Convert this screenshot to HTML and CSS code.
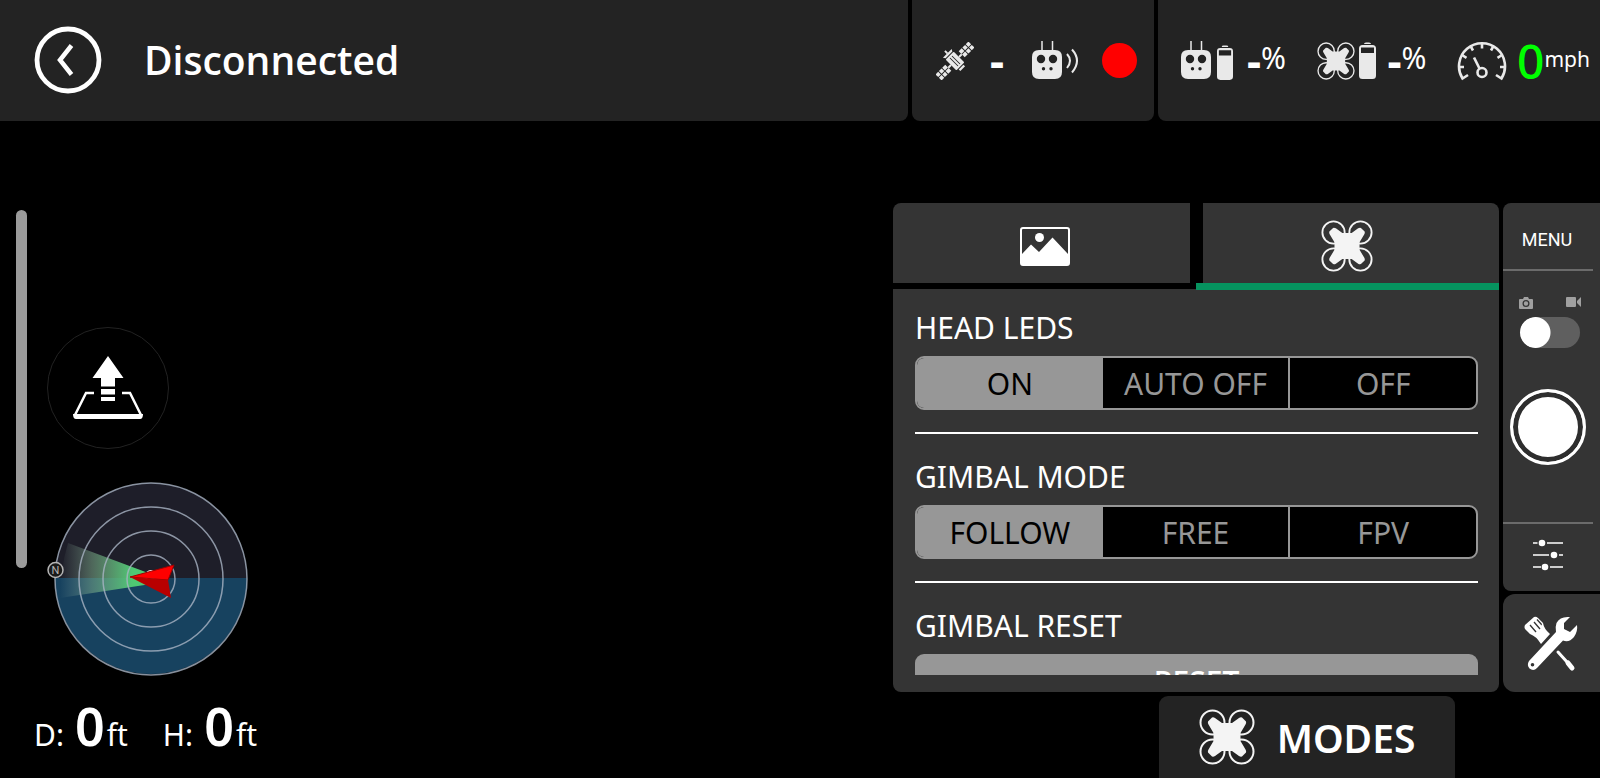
FILE: index.html
```html
<!DOCTYPE html>
<html lang="en">
<head>
<meta charset="utf-8">
<meta name="viewport" content="width=device-width, initial-scale=1">
<title>Flight Controller</title>
<link rel="stylesheet" href="styles.css">
</head>

<body>
<svg class="defs" aria-hidden="true">
  <symbol id="drone" viewBox="0 0 56 56">
    <g fill="none" stroke="currentColor" stroke-width="2">
      <circle cx="13.5" cy="13.5" r="12"/>
      <circle cx="42.5" cy="13.5" r="12"/>
      <circle cx="13.5" cy="42.5" r="12"/>
      <circle cx="42.5" cy="42.5" r="12"/>
    </g>
    <path fill="currentColor" d="M13 8.500L9 12.500Q8.500 14 9.500 15.500L14.500 24V32L9.500 40.500Q8.500 42 9 43.500L13 47.500Q14.500 48 16 47L23 42H33L40 47Q41.500 48 43 47.500L47 43.500Q47.500 42 46.500 40.500L41.500 32V24L46.500 15.500Q47.500 14 47 12.500L43 8.500Q41.500 8 40 9L33 14H23L16 9Q14.500 8 13 8.500Z"/>
  </symbol>
  <symbol id="remote" viewBox="0 0 30 39">
    <path stroke="currentColor" stroke-width="1.500" d="M10 0V10M20.500 0V10"/>
    <path fill="currentColor" fill-rule="evenodd" d="M7 9H23Q30 9 30 16V31Q30 38 23 38H7Q0 38 0 31V16Q0 9 7 9ZM9 13.800A4.200 4.200 0 1 0 9 22.200A4.200 4.200 0 1 0 9 13.800ZM21 13.800A4.200 4.200 0 1 0 21 22.200A4.200 4.200 0 1 0 21 13.800ZM11.500 26A1.700 1.700 0 1 0 11.500 29.400A1.700 1.700 0 1 0 11.500 26ZM19 26A1.700 1.700 0 1 0 19 29.400A1.700 1.700 0 1 0 19 26Z"/>
  </symbol>
  <symbol id="battery" viewBox="0 0 17 37">
    <path fill="currentColor" fill-rule="evenodd" d="M5 2Q5 .5 7 .5H10Q12 .5 12 2ZM3.500 3H13.500Q17 3 17 6.500V33.500Q17 37 13.500 37H3.500Q0 37 0 33.500V6.500Q0 3 3.500 3ZM2 5.500V11H15V5.500Z"/>
  </symbol>
</svg>

<header class="topbar">
  <div class="bar-cell title-cell">
    <button class="back" aria-label="Back">
      <svg width="68" height="68" viewBox="0 0 68 68">
        <circle cx="34" cy="34" r="31" fill="none" stroke="#fff" stroke-width="4.800"/>
        <path d="M37.500 19.500L26 34L37.500 48.500" fill="none" stroke="#fff" stroke-width="4.500"/>
      </svg>
    </button>
    <h1 class="title">Disconnected</h1>
  </div>
  <div class="bar-cell signal-cell">
    <svg class="icon" width="38" height="38" viewBox="-1 -1 40 40">
      <g transform="rotate(45 19 19)" fill="currentColor">
        <path fill-rule="evenodd" d="M12 13H26Q27 13 27 14V24Q27 25 26 25H12Q11 25 11 24V14Q11 13 12 13ZM13 17V18H25V17ZM13 20V21H25V20Z"/>
        <path d="M7.500 12.500L10 14V24L7.500 25.500ZM4 18H7.500V20H4ZM28 15.500H30.500V22.500H28ZM18 9H20V13H18ZM18 25H20V29H18Z"/>
        <path d="M14.500 4.500H18.500V9H14.500ZM19.500 4.500H23.500V9H19.500ZM14.500 -.5H18.500V3.500H14.500ZM19.500 -.5H23.500V3.500H19.500ZM14.500 -5.500H18.500V-1.500H14.500ZM19.500 -5.500H23.500V-1.500H19.500Z"/>
        <path d="M14.500 29H18.500V33.500H14.500ZM19.500 29H23.500V33.500H19.500ZM14.500 34.500H18.500V38.500H14.500ZM19.500 34.500H23.500V38.500H19.500ZM14.500 39.500H18.500V43.500H14.500ZM19.500 39.500H23.500V43.500H19.500Z"/>
      </g>
    </svg>
    <span class="dash">-</span>
    <span class="remote-signal">
      <svg class="icon" width="30" height="39"><use href="#remote"/></svg>
      <svg class="icon" width="13" height="26" viewBox="0 0 13 26" fill="none" stroke="currentColor" stroke-width="2">
        <path d="M1 6Q7 12.500 1 20M6 1.500Q16 12.500 6 24.500"/>
      </svg>
    </span>
    <span class="status-dot"></span>
  </div>
  <div class="bar-cell power-cell">
    <div class="power">
      <svg class="icon" width="30" height="39"><use href="#remote"/></svg>
      <svg class="icon battery" width="16" height="35"><use href="#battery"/></svg>
      <span class="dash">-</span><span class="percent">%</span>
    </div>
    <div class="power">
      <svg class="icon" width="38" height="38"><use href="#drone"/></svg>
      <svg class="icon battery-near" width="17" height="37"><use href="#battery"/></svg>
      <span class="dash">-</span><span class="percent">%</span>
    </div>
    <div class="speed">
      <svg class="icon" width="50" height="40" viewBox="0 0 50 40" fill="none" stroke="currentColor" stroke-width="2.600">
        <path d="M11 34L5.500 37.500A23 23 0 1 1 44.500 37.500L39 34"/>
        <path d="M2 26H7M48 26H43M5 14L9.500 16.800M45 14L40.500 16.800M13.500 5L16 9.500M36.500 5L34 9.500M25 2V7.500"/>
        <circle cx="25" cy="31.500" r="4.500"/>
        <path d="M22.500 27.500L17 16.500"/>
      </svg>
      <span class="speed-value">0</span><span class="speed-unit">mph</span>
    </div>
  </div>
</header>

<main class="flight">
  <section class="hud">
    <div class="hud-top">
      <div class="altitude-bar"></div>
      <div class="hud-column">
        <button class="launch" aria-label="Take off">
          <svg width="70" height="64" viewBox="0 0 70 64">
            <path fill="#fff" d="M35 0L50.500 22H42V30.500H28V22H19.500ZM28 33H42V38.500H28ZM28 41H42V45H28Z"/>
            <path fill="none" stroke="#fff" stroke-width="2.500" d="M21 37H13L2 59M49 37H57L68 59"/>
            <path fill="#fff" d="M0 58H70Q70 63 67 63H3Q0 63 0 58Z"/>
          </svg>
        </button>
        <svg class="radar" width="202" height="194" viewBox="0 0 202 194">
          <defs>
            <linearGradient id="beam" x1="0" x2="1">
              <stop offset="0" stop-color="#8fa79f" stop-opacity="0"/>
              <stop offset=".35" stop-color="#7fb08c" stop-opacity=".5"/>
              <stop offset=".8" stop-color="#4fc873"/>
            </linearGradient>
          </defs>
          <path fill="#1e1e29" d="M8 97A96 96 0 0 1 200 97Z"/>
          <path fill="#17425f" d="M8 96A96 96 0 0 0 200 96Z"/>
          <path fill="url(#beam)" d="M104 92L21 61Q13 88 13 116L104 102Z"/>
          <g fill="none" stroke="#a9b4c4" stroke-opacity=".8" stroke-width="1.500">
            <circle cx="104" cy="97" r="24"/>
            <circle cx="104" cy="97" r="48"/>
            <circle cx="104" cy="97" r="72"/>
            <circle cx="104" cy="97" r="96"/>
          </g>
          <circle cx="104" cy="94" r="6" fill="#fff"/>
          <path fill="#f00" stroke="#a00000" d="M83 95L127 83L121 98Z"/>
          <path fill="#b80000" d="M83 95L121 98L124 116Z"/>
          <circle cx="8.500" cy="88" r="7.500" fill="#1a1a1a" stroke="#b5b5b5" stroke-width="1.500"/>
          <text class="north" x="8.500" y="92" text-anchor="middle">N</text>
        </svg>
      </div>
    </div>
    <div class="readouts">
      <div class="readout"><span>D:</span><span class="readout-value">0</span><span>ft</span></div>
      <div class="readout"><span>H:</span><span class="readout-value">0</span><span>ft</span></div>
    </div>
  </section>

  <section class="controls">
    <div class="controls-row">
      <div class="panel">
        <div class="tabs">
          <button class="tab" aria-label="Camera settings">
            <svg width="50" height="39" viewBox="0 0 50 39">
              <rect x="1" y="1" width="48" height="37" rx="2" fill="none" stroke="#fff" stroke-width="2"/>
              <circle cx="19.500" cy="10.500" r="4.500" fill="#fff"/>
              <path fill="#fff" d="M2 27L11 17.500L19 25L32.500 10.500L48 27V38H2Z"/>
            </svg>
          </button>
          <button class="tab tab-active" aria-label="Aircraft settings">
            <svg class="icon-light" width="52" height="52"><use href="#drone"/></svg>
          </button>
        </div>
        <div class="panel-body">
          <div class="settings">
            <fieldset class="setting">
              <legend class="setting-name">HEAD LEDS</legend>
              <div class="segments">
                <label class="segment"><input type="radio" name="leds" checked><span>ON</span></label>
                <label class="segment"><input type="radio" name="leds"><span>AUTO OFF</span></label>
                <label class="segment"><input type="radio" name="leds"><span>OFF</span></label>
              </div>
            </fieldset>
            <fieldset class="setting">
              <legend class="setting-name">GIMBAL MODE</legend>
              <div class="segments">
                <label class="segment"><input type="radio" name="gimbal" checked><span>FOLLOW</span></label>
                <label class="segment"><input type="radio" name="gimbal"><span>FREE</span></label>
                <label class="segment"><input type="radio" name="gimbal"><span>FPV</span></label>
              </div>
            </fieldset>
            <div class="setting">
              <div class="setting-name">GIMBAL RESET</div>
              <button class="reset">RESET</button>
            </div>
          </div>
        </div>
      </div>

      <aside class="side">
        <div class="camera">
          <button class="menu">MENU</button>
          <div class="capture">
            <label class="mode-switch">
              <span class="mode-icons">
                <svg width="14" height="12" viewBox="0 0 14 12"><path fill="#a0a0a0" fill-rule="evenodd" d="M1 2H4L5 0H9L10 2H13Q14 2 14 3V11Q14 12 13 12H1Q0 12 0 11V3Q0 2 1 2ZM7 3A3.500 3.500 0 1 0 7 10A3.500 3.500 0 1 0 7 3ZM7 4.300A2.200 2.200 0 1 1 7 8.700A2.200 2.200 0 1 1 7 4.300Z"/></svg>
                <svg width="15" height="10" viewBox="0 0 15 10"><path fill="#a0a0a0" d="M1 0H9Q10 0 10 1V9Q10 10 9 10H1Q0 10 0 9V1Q0 0 1 0ZM11 4L15 0V10L11 6Z"/></svg>
              </span>
              <input class="toggle" type="checkbox" role="switch" aria-label="Video mode">
            </label>
            <button class="shutter" aria-label="Take photo"></button>
          </div>
          <button class="adjust" aria-label="Camera adjustments">
            <svg width="30" height="32" viewBox="0 0 30 32">
              <path stroke="#fff" stroke-width="1.600" d="M0 4H4.500M14 4H30M0 16H16M26 16H30M0 28H8M17 28H30"/>
              <circle cx="9" cy="4" r="3.300" fill="#fff"/>
              <circle cx="21" cy="16" r="3.300" fill="#fff"/>
              <circle cx="12" cy="28" r="3.300" fill="#fff"/>
            </svg>
          </button>
        </div>
        <button class="tools" aria-label="Tools">
          <svg width="54" height="56" viewBox="0 0 54 56">
            <path fill="#fff" fill-rule="evenodd" d="M10 1Q12 0 14 2L19 7Q20 13 26 18L17 28Q12 20 6 18L1 13Q0 11 1 9ZM10.500 5.500L9.500 6.500L15.500 13.500L16.500 12.500ZM6.500 8.500L5.500 9.500L11.500 16.500L12.500 15.500ZM13.500 3L12.500 4L17.500 9.500L18 8Z"/>
            <path stroke="#fff" stroke-width="3" stroke-linecap="round" d="M34 36L43 46"/>
            <path stroke="#fff" stroke-width="5" stroke-linecap="round" d="M44 47L48 52"/>
            <path fill="#fff" fill-rule="evenodd" d="M46 1Q36 0 32.500 7Q31 11 32 16L5 45Q2.500 49 5.500 52.500Q9.500 55.500 13 52L39 24.500Q45 27 50 21Q54 15 53 9L46 16L40 13V7ZM8.500 47A1.800 1.800 0 1 0 8.500 50.600A1.800 1.800 0 1 0 8.500 47Z"/>
          </svg>
        </button>
      </aside>
    </div>
    <button class="modes">
      <svg class="icon-light" width="56" height="56"><use href="#drone"/></svg>
      <span>MODES</span>
    </button>
  </section>
</main>
</body>
</html>
```
FILE: styles.css
```css
* {
  box-sizing: border-box;
}

body {
  margin: 0;
  min-height: 100vh;
  display: flex;
  flex-direction: column;
  background: #000;
  color: #fff;
  font-family: "Noto Sans", sans-serif;
}

button {
  margin: 0;
  padding: 0;
  border: 0;
  background: none;
  color: inherit;
  font: inherit;
  cursor: pointer;
}

svg {
  display: block;
  flex: none;
}

.defs {
  position: absolute;
  width: 0;
  height: 0;
}

.icon {
  color: #e9e9e9;
}

.icon-light {
  color: #f4f4f4;
}

/* top bar */

.topbar {
  display: flex;
  gap: 4px;
  height: 121px;
}

.bar-cell {
  display: flex;
  align-items: center;
  background: #232323;
  border-radius: 0 0 8px 8px;
}

.title-cell {
  flex: 1;
  gap: 42px;
  padding: 0 0 2px 34px;
  border-bottom-left-radius: 0;
}

.title {
  margin: 0;
  font-family: "Open Sans", "Noto Sans", sans-serif;
  font-size: 39px;
  font-weight: 600;
}

.signal-cell {
  width: 242px;
  padding: 0 17px 0 24px;
}

.dash {
  padding-bottom: 2px;
  font-size: 44px;
  font-weight: 700;
  line-height: 60px;
}

.signal-cell .dash {
  margin-left: 16px;
}

.remote-signal {
  display: flex;
  align-items: center;
  gap: 4px;
  margin-left: 28px;
}

.status-dot {
  width: 35px;
  height: 35px;
  margin-left: auto;
  border-radius: 50%;
  background: #f00;
}

.power-cell {
  width: 442px;
  padding: 0 10px 0 23px;
  justify-content: space-between;
  border-bottom-right-radius: 0;
}

.power,
.speed {
  display: flex;
  align-items: center;
}

.battery {
  margin: 4px 14px 0 6px;
}

.battery-near {
  margin: 0 12px 0 4px;
}

.percent {
  padding-bottom: 6px;
  font-size: 30px;
  line-height: 36px;
}

.speed-value {
  margin-left: 10px;
  color: #0f0;
  font-size: 48px;
  font-weight: 500;
  line-height: 60px;
}

.speed-unit {
  padding-bottom: 3px;
  font-size: 21px;
}

/* flight view */

.flight {
  flex: 1;
  display: flex;
  justify-content: space-between;
}

.hud {
  display: flex;
  flex-direction: column;
  justify-content: space-between;
  padding: 89px 0 13px 16px;
}

.hud-top {
  display: flex;
  gap: 20px;
}

.altitude-bar {
  width: 11px;
  height: 358px;
  border-radius: 6px;
  background: #9b9b9b;
}

.hud-column {
  padding-top: 117px;
}

.launch {
  width: 122px;
  height: 122px;
  display: grid;
  place-items: center;
  border: 1px solid #222;
  border-radius: 50%;
}

.radar {
  margin-top: 33px;
}

.north {
  fill: #b5b5b5;
  font-family: Roboto, sans-serif;
  font-size: 11px;
}

.readouts {
  display: flex;
  gap: 35px;
  padding-left: 18px;
}

.readout {
  display: flex;
  align-items: baseline;
  font-size: 30px;
  line-height: 60px;
}

.readout-value {
  margin: 0 2px 0 11px;
  font-size: 52px;
  font-weight: 600;
}

/* settings panel */

.controls {
  padding-top: 82px;
}

.controls-row {
  display: flex;
  gap: 4px;
}

.panel {
  width: 606px;
  height: 489px;
  display: flex;
  flex-direction: column;
}

.tabs {
  display: flex;
  gap: 13px;
}

.tab {
  position: relative;
  flex: 1;
  height: 80px;
  margin-bottom: 6px;
  padding: 6px 0 0 8px;
  display: grid;
  place-items: center;
  background: #343434;
  border-radius: 8px 0 0 0;
}

.tab-active {
  padding: 6px 8px 0 0;
  border-radius: 0 8px 0 0;
}

.tab-active::after {
  content: "";
  position: absolute;
  top: 80px;
  left: -7px;
  right: 0;
  height: 7px;
  background: #06935f;
}

.panel-body {
  flex: 1;
  min-height: 0;
  display: flex;
  padding: 0 21px 17px 22px;
  background: #343434;
  border-radius: 0 0 8px 8px;
}

.settings {
  flex: 1;
  padding-top: 18px;
  overflow: hidden;
}

.setting {
  margin: 0 0 22px;
  padding: 0 0 22px;
  border: 0;
  border-bottom: 2px solid #fff;
}

.setting-name {
  margin-bottom: 7px;
  padding: 0;
  font-size: 30px;
  line-height: 42px;
}

.segments {
  display: flex;
  height: 54px;
  overflow: hidden;
  background: #000;
  border: 2px solid #979797;
  border-radius: 9px;
}

.segment {
  flex: 1;
  display: flex;
}

.segment + .segment + .segment {
  border-left: 2px solid #979797;
}

.segment input {
  appearance: none;
  width: 0;
  margin: 0;
}

.segment span {
  flex: 1;
  color: #979797;
  font-size: 30px;
  line-height: 52px;
  text-align: center;
}

.segment input:checked + span {
  background: #979797;
  color: #000;
}

.reset {
  width: 100%;
  height: 54px;
  background: #979797;
  border-radius: 9px;
  font-size: 30px;
  font-weight: 500;
}

/* camera column */

.side {
  width: 97px;
  display: flex;
  flex-direction: column;
  gap: 3px;
}

.camera {
  flex: 1;
  display: flex;
  flex-direction: column;
  padding-right: 7px;
  background: #343434;
  border-radius: 8px 0 0 8px;
}

.menu {
  height: 66px;
  padding: 6px 2px 0 0;
  font-family: Roboto, sans-serif;
  font-size: 18px;
}

.capture {
  flex: 1;
  display: flex;
  flex-direction: column;
  align-items: center;
  padding-top: 26px;
  border-top: 2px solid #6b6b6b;
  border-bottom: 2px solid #6b6b6b;
}

.mode-switch {
  display: flex;
  flex-direction: column;
  align-items: center;
  gap: 8px;
  padding-left: 4px;
}

.mode-icons {
  width: 62px;
  display: flex;
  justify-content: space-between;
}

.toggle {
  appearance: none;
  width: 60px;
  height: 31px;
  margin: 0;
  border-radius: 16px;
  background: radial-gradient(circle at 15px 50%, #fff 15px, #5f5f5f 16px);
}

.shutter {
  width: 76px;
  height: 76px;
  margin-top: 41px;
  border: 3px solid #fff;
  border-radius: 50%;
  background: #fff;
  box-shadow: inset 0 0 0 5px #2e2e2e;
}

.adjust {
  height: 67px;
  padding-bottom: 6px;
  display: grid;
  place-items: center;
}

.tools {
  height: 98px;
  display: grid;
  place-items: center;
  padding: 2px 2px 0 0;
  background: #343434;
  border-radius: 12px 0 0 12px;
}

.modes {
  width: 296px;
  height: 82px;
  display: flex;
  align-items: center;
  justify-content: center;
  gap: 22px;
  margin: 4px 0 0 266px;
  background: #232323;
  border-radius: 9px 9px 0 0;
  font-size: 39px;
  font-weight: 600;
}
```
